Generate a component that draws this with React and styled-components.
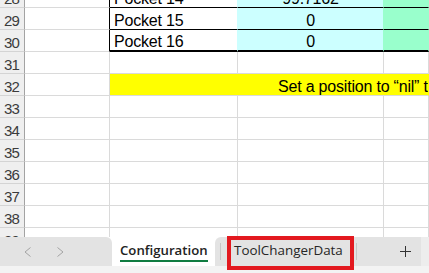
import React from 'react';
import styled, { createGlobalStyle } from 'styled-components';

const Global = createGlobalStyle`
  html, body { margin: 0; padding: 0; background: #fff; }
  body { width: 429px; height: 273px; overflow: hidden; }
  * { box-sizing: border-box; }
`;

const Window = styled.div`
  width: 429px;
  height: 273px;
  display: flex;
  flex-direction: column;
  overflow: hidden;
  font-family: "Liberation Sans", Arial, sans-serif;
`;

const Sheet = styled.div`
  height: 237px;
  flex: none;
  overflow: hidden;
  display: grid;
  grid-template-columns: 25px 85px 128px 146px 1fr;
  grid-template-rows: 8px repeat(11, 22px);
`;

const RowHead = styled.div`
  background: #efefef;
  border-right: 1px solid #a3a3a3;
  border-bottom: 1px solid #d4d4d4;
  display: flex;
  align-items: flex-end;
  justify-content: center;
  font-size: 15px;
  line-height: 16px;
  letter-spacing: -0.8px;
  color: #3b3b3b;
  overflow: hidden;
  padding-right: 1px;
`;

const Cell = styled.div`
  background: ${p => p.$bg || '#fff'};
  border-right: 1px solid ${p => p.$rc || '#dadada'};
  border-bottom: ${p => p.$bw || 1}px solid ${p => p.$bc || '#dadada'};
  grid-column: ${p => p.$span || 'auto'};
  display: flex;
  align-items: flex-end;
  justify-content: ${p => (p.$align === 'center' ? 'center' : 'flex-start')};
  padding: 0 4px 0 ${p => p.$indent || 4}px;
  font-size: 16px;
  line-height: 16px;
  letter-spacing: -0.2px;
  color: #000;
  white-space: nowrap;
  overflow: hidden;
  min-width: 0;
`;

const TabBar = styled.div`
  height: 29px;
  flex: none;
  display: flex;
  background: #fff;
  font-family: "Open Sans", "Noto Sans", sans-serif;
`;

const NavArea = styled.div`
  width: 112px;
  flex: none;
  background: #e3e3e3;
  border-top-right-radius: 6px;
  display: flex;
  align-items: center;
  padding-left: 24px;
  gap: 26px;
`;

const NavArrow = styled.svg`
  width: 7px;
  height: 10px;
  display: block;
`;

const ActiveTab = styled.div`
  width: 103px;
  flex: none;
  background: #fff;
  padding: 5px 7px 0 8px;
  display: flex;
  flex-direction: column;
  align-items: flex-start;
`;

const ActiveLabel = styled.span`
  font-size: 13.2px;
  line-height: 16px;
  font-weight: 600;
  color: #222;
  white-space: nowrap;
  padding-bottom: 2px;
  border-bottom: 2px solid #107c41;
`;

const RestArea = styled.div`
  flex: 1;
  background: #e3e3e3;
  border-top-left-radius: 6px;
  display: flex;
  align-items: stretch;
`;

const Divider = styled.div`
  width: 1px;
  flex: none;
  background: #c6c6c6;
  margin: 6px 0 6px ${p => p.$gap}px;
`;

const SheetTab = styled.div`
  position: relative;
  width: 127px;
  flex: none;
  margin-left: 6px;
  padding: 5px 0 0 7px;
  font-size: 13.4px;
  line-height: 16px;
  color: #262626;
  white-space: nowrap;
`;

const Highlight = styled.div`
  position: absolute;
  top: -1px;
  left: 0;
  right: 0;
  bottom: -4px;
  border: 4px solid #e3191f;
  pointer-events: none;
`;

const AddButton = styled.div`
  width: 30px;
  margin-left: 33px;
  display: flex;
  align-items: center;
  justify-content: center;
`;

const EndCap = styled.div`
  width: 8px;
  margin-left: auto;
  background: #ededed;
`;

const Strip = styled.div`
  height: 7px;
  flex: none;
  background: #f3f3f3;
`;

const YELLOW = '#ffff00';
const CYAN = '#ccffff';
const MINT = '#99ffcc';

const tableRows = [
  { n: 28, name: 'Pocket 14', val: '99.7162', bw: 1 },
  { n: 29, name: 'Pocket 15', val: '0', bw: 1 },
  { n: 30, name: 'Pocket 16', val: '0', bw: 2 },
];

const emptyRows = [33, 34, 35, 36, 37, 38, 39];

export default function App() {
  return (
    <Window>
      <Global />
      <Sheet>
        {tableRows.map(r => (
          <React.Fragment key={r.n}>
            <RowHead>{r.n}</RowHead>
            <Cell $rc="#000" />
            <Cell $rc={CYAN} $bc="#000" $bw={r.bw}>{r.name}</Cell>
            <Cell $bg={CYAN} $rc={MINT} $bc="#000" $bw={r.bw} $align="center">{r.val}</Cell>
            <Cell $bg={MINT} $rc={MINT} $bc="#000" $bw={r.bw} />
          </React.Fragment>
        ))}
        <RowHead>31</RowHead>
        <Cell />
        <Cell />
        <Cell />
        <Cell />
        <RowHead>32</RowHead>
        <Cell />
        <Cell $span="3 / -1" $bg={YELLOW} $rc={YELLOW} $indent={168}>
          Set a position to “nil” to leave the pocket empty
        </Cell>
        {emptyRows.map(n => (
          <React.Fragment key={n}>
            <RowHead>{n}</RowHead>
            <Cell />
            <Cell />
            <Cell />
            <Cell />
          </React.Fragment>
        ))}
      </Sheet>
      <TabBar>
        <NavArea>
          <NavArrow viewBox="0 0 7 10">
            <path d="M6.5 0.5 L1 5 L6.5 9.5" fill="none" stroke="#a3a3a3" strokeWidth="1" />
          </NavArrow>
          <NavArrow viewBox="0 0 7 10">
            <path d="M0.5 0.5 L6 5 L0.5 9.5" fill="none" stroke="#a3a3a3" strokeWidth="1" />
          </NavArrow>
        </NavArea>
        <ActiveTab>
          <ActiveLabel>Configuration</ActiveLabel>
        </ActiveTab>
        <RestArea>
          <Divider $gap={5} />
          <SheetTab>
            ToolChangerData
            <Highlight />
          </SheetTab>
          <Divider $gap={2} />
          <AddButton>
            <svg width="11" height="11" viewBox="0 0 11 11">
              <path d="M5.5 0 V11 M0 5.5 H11" stroke="#333" strokeWidth="1" />
            </svg>
          </AddButton>
          <EndCap />
        </RestArea>
      </TabBar>
      <Strip />
    </Window>
  );
}
